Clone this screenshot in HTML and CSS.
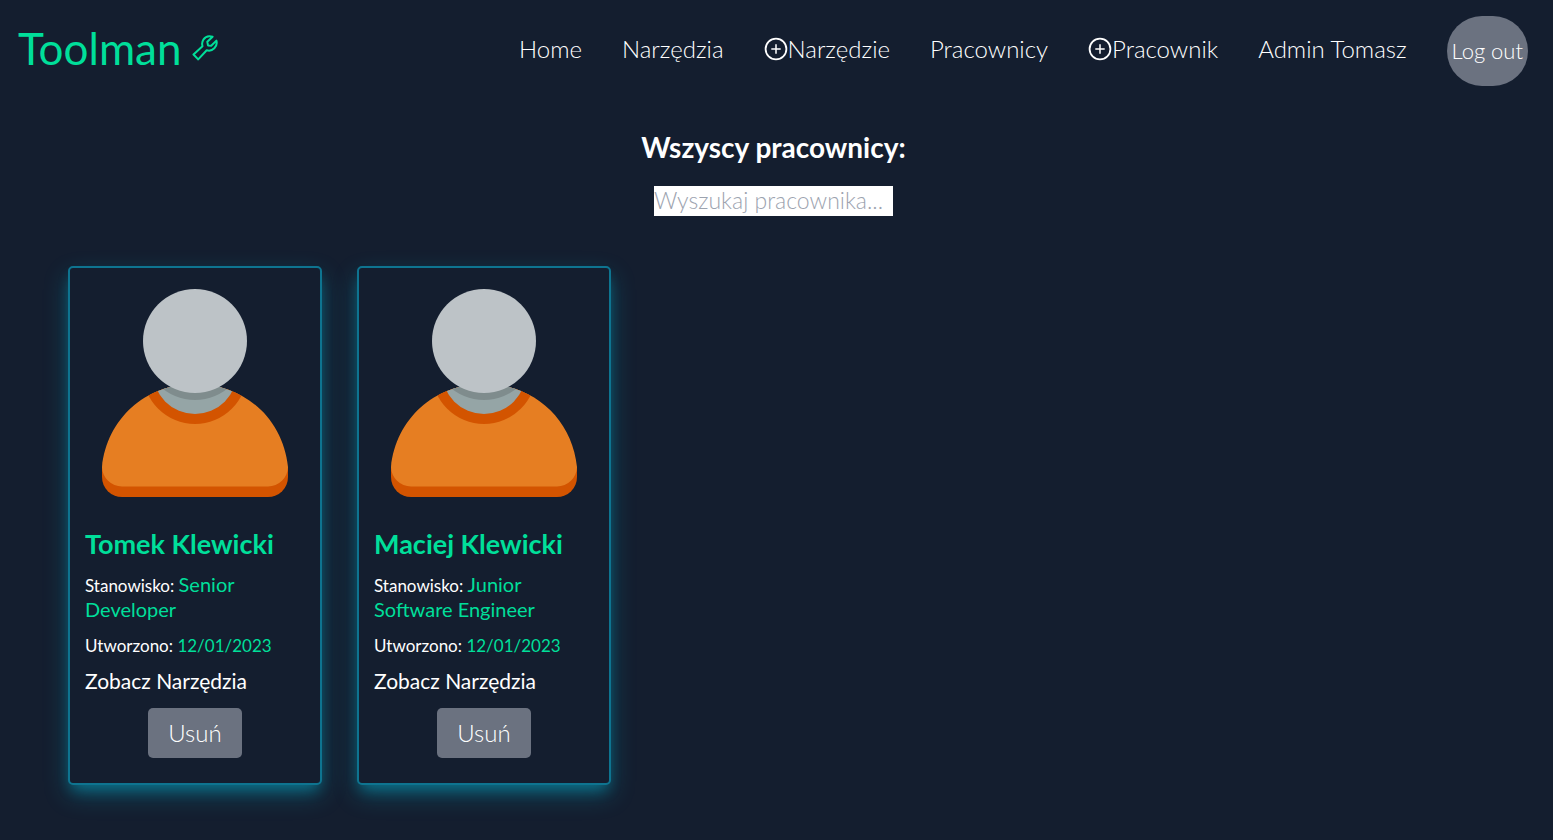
FILE: index.html
```html
<!DOCTYPE html>
<html lang="pl">
<head>
<meta charset="utf-8">
<title>Toolman</title>
<link rel="stylesheet" href="styles.css">
</head>
<body>
<svg class="defs" aria-hidden="true">
  <symbol id="plus" viewBox="0 0 24 24">
    <circle cx="12" cy="12" r="10.4" fill="none" stroke="currentColor" stroke-width="1.8"/>
    <path d="M12 7.3v9.4M7.3 12h9.4" fill="none" stroke="currentColor" stroke-width="1.5"/>
  </symbol>
  <symbol id="avatar" viewBox="0 0 250 250">
    <clipPath id="torso"><path d="M32 199C37 151 75 116 125 116s88 35 93 83a20 20 0 0 1-20 19.500H52A20 20 0 0 1 32 199z"/></clipPath>
    <path fill="#d35400" d="M32 199v10a20 20 0 0 0 20 20h146a20 20 0 0 0 20-20v-10z"/>
    <g clip-path="url(#torso)">
      <path fill="#e67e22" d="M0 100h250v130H0z"/>
      <circle cx="125" cy="104" r="52" fill="#d35400"/>
      <circle cx="125" cy="104" r="42" fill="#95a5a6"/>
      <clipPath id="neck"><circle cx="125" cy="104" r="42"/></clipPath>
      <circle cx="125" cy="80" r="52" fill="#7f8c8d" clip-path="url(#neck)"/>
    </g>
    <circle cx="125" cy="73" r="52" fill="#bdc3c7"/>
  </symbol>
</svg>
<header class="header">
  <a class="logo" href="#">Toolman
    <svg class="wrench" viewBox="0 0 26 26" aria-hidden="true"><path d="M1.500 19.500 10.500 11.200C9 6.500 12.500 1 17.500 1.200L20.600 1.700 15.300 6.800 16 10.400 19.200 10.800 24.400 5.600C26 11.500 20.500 17 14.700 15.300L6.200 24.400Z"/></svg>
  </a>
  <nav class="nav">
    <a href="#">Home</a>
    <a href="#">Narzędzia</a>
    <a href="#"><svg class="plus" aria-hidden="true"><use href="#plus"/></svg>Narzędzie</a>
    <a href="#">Pracownicy</a>
    <a href="#"><svg class="plus" aria-hidden="true"><use href="#plus"/></svg>Pracownik</a>
    <a href="#">Admin Tomasz</a>
    <button class="logout" type="button">Log out</button>
  </nav>
</header>
<main>
  <section class="intro">
    <h1>Wszyscy pracownicy:</h1>
    <input class="search" type="text" aria-label="Wyszukaj pracownika" placeholder="Wyszukaj pracownika...">
  </section>
  <section class="cards">
    <article class="card">
      <svg class="avatar" viewBox="0 0 250 250" aria-hidden="true"><use href="#avatar"/></svg>
      <div class="info">
        <h2>Tomek Klewicki</h2>
        <p>Stanowisko: <span>Senior Developer</span></p>
        <p>Utworzono: <span class="date">12/01/2023</span></p>
        <a class="tools" href="#">Zobacz Narzędzia</a>
        <button class="remove" type="button">Usuń</button>
      </div>
    </article>
    <article class="card">
      <svg class="avatar" viewBox="0 0 250 250" aria-hidden="true"><use href="#avatar"/></svg>
      <div class="info">
        <h2>Maciej Klewicki</h2>
        <p>Stanowisko: <span>Junior Software Engineer</span></p>
        <p>Utworzono: <span class="date">12/01/2023</span></p>
        <a class="tools" href="#">Zobacz Narzędzia</a>
        <button class="remove" type="button">Usuń</button>
      </div>
    </article>
  </section>
</main>
</body>
</html>
```
FILE: styles.css
```css
* { box-sizing: border-box; }
body {
  margin: 0;
  background: #141e2f;
  color: #fff;
  font-family: Lato, "Open Sans", sans-serif;
  font-size: 24px;
  font-weight: 300;
  line-height: 30px;
}
h1, h2, p { margin: 0; }
a { color: inherit; text-decoration: none; }
button, input { font: inherit; border: 0; }
button { color: #fff; background: #6b7280; cursor: pointer; }
.defs { position: absolute; width: 0; height: 0; }
.header {
  display: flex;
  align-items: center;
  justify-content: space-between;
  padding: 16px 25px 16px 18px;
}
.logo {
  display: flex;
  align-items: center;
  gap: 10px;
  padding-bottom: 6px;
  color: #00df9a;
  font-size: 44px;
  font-weight: 400;
  line-height: 50px;
}
.wrench {
  width: 26px;
  height: 26px;
  fill: none;
  stroke: currentColor;
  stroke-width: 2;
  stroke-linejoin: round;
}
.nav { display: flex; align-items: center; gap: 40px; }
.nav a { display: flex; align-items: center; padding-bottom: 4px; white-space: nowrap; }
.plus { width: 24px; height: 24px; }
.logout {
  height: 70px;
  padding: 0 5px;
  border-radius: 35px;
  font-size: 22px;
}
.intro {
  display: flex;
  flex-direction: column;
  align-items: center;
  gap: 22px;
  padding: 28px 6px 0 0;
}
h1 { font-size: 28px; line-height: 34px; }
.search {
  width: 239px;
  height: 30px;
  padding: 0 0 2px;
  background: #fff;
  color: #141e2f;
  font-size: 23px;
}
.search::placeholder { color: #9ca3af; opacity: 1; }
.cards {
  display: flex;
  flex-wrap: wrap;
  align-items: flex-start;
  gap: 35px;
  padding: 50px 68px;
}
.card {
  width: 254px;
  border: 2px solid #0e7490;
  border-radius: 5px;
  background: #141e2f;
  box-shadow: 0 10px 24px rgba(6, 182, 212, .3), 0 8px 14px -4px rgba(6, 182, 212, .4);
}
.avatar { display: block; width: 100%; }
.info {
  display: flex;
  flex-direction: column;
  align-items: flex-start;
  gap: 10px;
  padding: 7px 15px 25px;
}
h2 { color: #00df9a; font-size: 27px; line-height: 38px; }
.info p { font-size: 17px; font-weight: 400; line-height: 25px; }
.info span { color: #00df9a; font-size: 20px; line-height: 20px; }
.info .date { font-size: 17px; }
.tools { font-size: 21px; font-weight: 400; line-height: 25px; }
.remove {
  align-self: center;
  height: 50px;
  margin-top: 5px;
  padding: 0 20px;
  border-radius: 5px;
}
```
